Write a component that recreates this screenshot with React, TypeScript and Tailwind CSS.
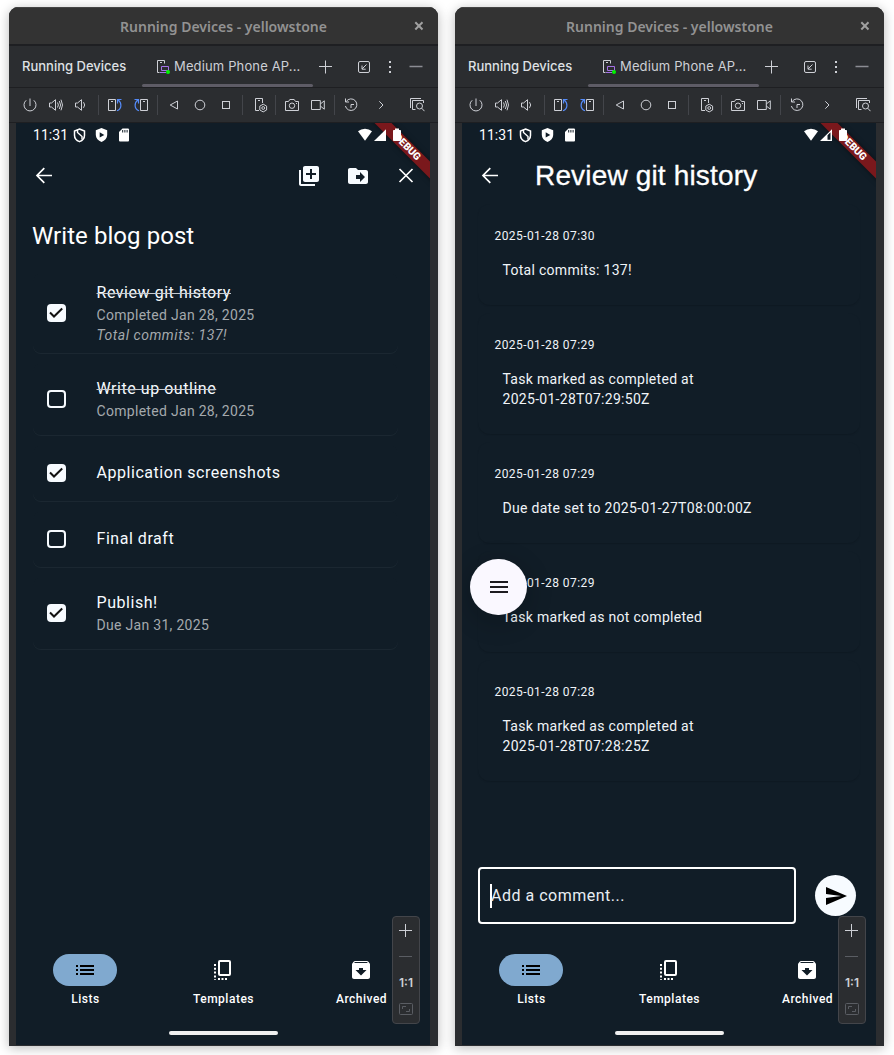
import React from "react";
import {
  MdLibraryAdd,
  MdDriveFileMove,
  MdSend,
  MdMenu,
  MdArchive,
} from "react-icons/md";

type IconProps = { children: React.ReactNode; className?: string; w?: number; h?: number };

function Glyph({ children, className = "", w = 16, h = 16 }: IconProps) {
  return (
    <svg
      width={w}
      height={h}
      viewBox={`0 0 ${w} ${h}`}
      fill="none"
      stroke="#ced0d6"
      strokeWidth="1"
      className={`shrink-0 ${className}`}
    >
      {children}
    </svg>
  );
}

function BackArrow() {
  return (
    <svg width="24" height="24" viewBox="0 0 24 24" fill="none" stroke="#fff" strokeWidth="1.700">
      <path d="M20 11.500H5.200M12.300 4.200L5 11.500l7.300 7.300" />
    </svg>
  );
}

function CloseCross() {
  return (
    <svg width="24" height="24" viewBox="0 0 24 24" fill="none" stroke="#fff" strokeWidth="1.700">
      <path d="M5.500 5l13 13M18.500 5l-13 13" />
    </svg>
  );
}

function Slot({ children, className = "w-[26px]" }: { children: React.ReactNode; className?: string }) {
  return <div className={`flex shrink-0 items-center justify-center ${className}`}>{children}</div>;
}

function Separator() {
  return (
    <div className="flex w-[7px] shrink-0 justify-center">
      <div className="h-5 w-px bg-[#43454a]" />
    </div>
  );
}

function TitleBar() {
  return (
    <div className="relative flex h-[37px] shrink-0 items-center justify-center border-t border-[#454545] bg-[#333333] font-['Noto_Sans',sans-serif] text-[14px] font-semibold text-[#929292]">
      <span>Running Devices - yellowstone</span>
      <svg width="10" height="10" viewBox="0 0 10 10" className="absolute right-[14px] top-[13px]" stroke="#a0a0a0" strokeWidth="2">
        <path d="M1.3 1.3l7.2 7.2M8.5 1.3L1.3 8.5" />
      </svg>
    </div>
  );
}

function TabBar() {
  return (
    <div className="flex h-[44px] shrink-0 items-center border-b border-t-2 border-b-[#1e1f22] border-t-[#1e1f22] bg-[#2b2d30] pl-[13px] font-['Inter',sans-serif] text-[13px] text-[#dfe1e5]">
      <span className="w-[120px] shrink-0 font-medium">Running Devices</span>
      <div className="relative flex h-full w-[171px] shrink-0 items-center pl-[13px]">
        <Glyph className="mr-[3px]">
          <path d="M4.5 13.5h-2v-12h7v3" />
          <path d="M5 3.5h2" />
          <path d="M6.5 7.5h7v4h-7zM5 13.5h6" stroke="#a571e6" />
          <circle cx="13" cy="13" r="2" fill="#00f500" stroke="none" />
        </Glyph>
        <span className="whitespace-nowrap tracking-[0.14px] text-[#ced0d6]">Medium Phone AP...</span>
        <div className="absolute bottom-0 left-0 h-[3px] w-full rounded-full bg-[#5e5c66]" />
      </div>
      <Glyph className="ml-1">
        <path d="M8.5 1.5v13M2 7.500h13" />
      </Glyph>
      <Glyph className="ml-[23px]">
        <rect x="2.5" y="2.5" width="11" height="11" rx="1.5" />
        <path d="M10.5 5.5L6 10M6 6.5v3.7h3.7" />
      </Glyph>
      <Glyph className="ml-[10px]">
        <path d="M8 2v2M8 7v2M8 12v2" strokeWidth="2" />
      </Glyph>
      <Glyph className="ml-[10px]">
        <path d="M1.500 7.500h13" stroke="#8b8d93" strokeWidth="1.4" />
      </Glyph>
    </div>
  );
}

function DeviceToolbar() {
  return (
    <div className="flex h-[35px] shrink-0 items-center border-b border-[#1e1f22] bg-[#2b2d30] pl-2">
      <Slot>
        <Glyph>
          <path d="M4.2 3.3a6 6 0 1 0 7.6 0M8 1.5V9" />
        </Glyph>
      </Slot>
      <Slot className="w-[26px] pr-px">
        <Glyph>
          <path d="M1.5 6v4h2l4 3.3V2.700l-4 3.300zM9.500 5.500q1.800 2.500 0 5M11.300 4q2.600 4 0 8M13 2.700q3 5.300 0 10.600" />
        </Glyph>
      </Slot>
      <Slot className="w-[26px] pr-[2px]">
        <Glyph>
          <path d="M2.500 6v4h2l4 3.300V2.700l-4 3.300zM10.500 5.200q2.400 2.800 0 5.600" />
        </Glyph>
      </Slot>
      <Separator />
      <Slot>
        <Glyph>
          <path d="M1.500 2.500h7v11h-7zM4 4.500h2" />
          <path d="M10 13.800c4.800-2 5.200-7.500 1-11M14.500 2.500h-4v4" stroke="#548af7" strokeWidth="1.200" />
        </Glyph>
      </Slot>
      <Slot>
        <Glyph>
          <path d="M7.500 2.500h7v11h-7zM10 4.500h2" />
          <path d="M6 13.800C1.200 11.800.8 6.300 5 2.800M1.500 2.500h4v4" stroke="#548af7" strokeWidth="1.200" />
        </Glyph>
      </Slot>
      <Separator />
      <Slot>
        <Glyph>
          <path d="M11.500 4v8L4.200 8z" />
        </Glyph>
      </Slot>
      <Slot>
        <Glyph>
          <circle cx="8" cy="8" r="4.800" />
        </Glyph>
      </Slot>
      <Slot>
        <Glyph>
          <rect x="4.500" y="4.500" width="7" height="7" />
        </Glyph>
      </Slot>
      <Separator />
      <Slot className="w-[26px] pl-[3px]">
        <Glyph>
          <path d="M6 13.500H2.500v-12h7V6M5 3.500h2" />
          <path d="M10.200 7.200l3.400 1.900v3.900l-3.400 1.900-3.400-1.900V9.100z" />
          <circle cx="10.200" cy="11" r="1.400" />
        </Glyph>
      </Slot>
      <Separator />
      <Slot>
        <Glyph>
          <path d="M1.500 4.500h3l1.300-2h4.400l1.300 2h3v9h-13z" strokeLinejoin="round" />
          <circle cx="8" cy="8.700" r="2.700" />
          <path d="M12 6.500h1" />
        </Glyph>
      </Slot>
      <Slot>
        <Glyph>
          <path d="M1.500 3.500h8.800v9H1.500zM10.300 7l4-3.200v8.400l-4-3.200" />
        </Glyph>
      </Slot>
      <Separator />
      <Slot>
        <Glyph>
          <path d="M3.200 4.500A5.800 5.800 0 1 1 2.400 9M2.500 1.500v3.500H6M8 11V7.500h3" />
        </Glyph>
      </Slot>
      <Slot className="w-[33px]">
        <Glyph>
          <path d="M6.300 4.300L10 8l-3.700 3.700" />
        </Glyph>
      </Slot>
      <Slot className="ml-[7px] w-[26px]">
        <Glyph>
          <path d="M1.500 11V1.500H12M6.500 12.500h-3v-9h11V6" />
          <circle cx="10.500" cy="9" r="3" />
          <path d="M12.700 11.200l2.800 3" />
        </Glyph>
      </Slot>
    </div>
  );
}

function StatusBar({ weakSignal }: { weakSignal: boolean }) {
  return (
    <div className="relative flex h-6 shrink-0 items-center pl-[17px] font-['Roboto',sans-serif] text-[14px] text-white">
      <span className="w-[39px] pt-px tracking-[0.05px]">11:31</span>
      <svg width="14" height="16" viewBox="0 0 14 16" className="mr-[9px]" fill="none" stroke="#fff" strokeWidth="1.500">
        <path d="M7.500 2l5 2v4.200c0 3-2 5.300-5 6.400-3-1.100-5-3.400-5-6.400V4z" />
        <path d="M5.500 3v2.500l4.500 4v3" strokeWidth="1.400" />
      </svg>
      <svg width="14" height="16" viewBox="0 0 14 16" className="mr-[9px]">
        <path d="M6.500 1l5.700 2.300V8c0 3.300-2.400 5.700-5.700 7C3.200 13.700.8 11.300.8 8V3.300z" fill="#fff" />
        <path d="M4.700 5.200l4.600 2.700-4.600 2.700z" fill="#111d27" />
      </svg>
      <svg width="12" height="16" viewBox="0 0 12 16">
        <path d="M4.500 1.500H10a1 1 0 0 1 1 1v11a1 1 0 0 1-1 1H2a1 1 0 0 1-1-1V5z" fill="#fff" />
        <path d="M4.700 3v2.500M6.900 3v2.500M9.100 3v2.500" stroke="#111d27" strokeWidth="1" />
      </svg>
      <svg width="46" height="16" viewBox="0 0 46 16" className="absolute left-[341px] top-1 z-20" fill="#fff">
        <path d="M1 4.300a10.500 10.500 0 0 1 14 0L8 13.700z" />
        {weakSignal ? (
          <path fillRule="evenodd" d="M17 14L29 2.300V14zM24.500 8.300v4.400h3V5.300z" />
        ) : (
          <path d="M17 14L29 2.300V14z" />
        )}
        <path d="M38 1.500h4V3h1.200a.8.800 0 0 1 .8.800v9.400a.8.800 0 0 1-.8.800h-6.400a.8.800 0 0 1-.8-.8V3.800a.8.800 0 0 1 .8-.8H38z" />
      </svg>
    </div>
  );
}

function DebugBanner() {
  return (
    <div className="absolute right-0 top-0 z-10 h-16 w-16 overflow-hidden">
      <div className="absolute left-[-19.500px] top-[18px] flex h-[12px] w-[120px] rotate-45 items-center justify-center bg-[#7a181c] pl-px font-['Roboto',sans-serif] text-[10.200px] font-black text-white shadow-[0_0_5px_rgba(0,0,0,0.5)]">
        DEBUG
      </div>
    </div>
  );
}

function ListGlyph() {
  return (
    <svg width="24" height="24" viewBox="0 0 24 24" fill="#000">
      <path d="M3 7h2v2H3zM3 11h2v2H3zM3 15h2v2H3zM7 7h14v2H7zM7 11h14v2H7zM7 15h14v2H7z" />
    </svg>
  );
}

function TemplatesGlyph() {
  return (
    <svg width="24" height="24" viewBox="0 0 24 24" fill="none" stroke="#fff" strokeWidth="2">
      <rect x="8" y="3" width="11" height="14" rx="1" />
      <path d="M4 6v16" strokeDasharray="2 1.800" />
      <path d="M7 21h9.500" strokeDasharray="2 1.500" />
    </svg>
  );
}

function NavItem({ label, active, children }: { label: string; active?: boolean; children: React.ReactNode }) {
  return (
    <div className="flex flex-1 flex-col items-center">
      <div className={`flex h-8 w-16 items-center justify-center rounded-full ${active ? "bg-[#80a9cf]" : ""}`}>
        {children}
      </div>
      <span className="mt-[5px] pl-px text-[12px] font-medium leading-4 tracking-[0.5px] text-white">{label}</span>
    </div>
  );
}

function BottomNav() {
  return (
    <div className="flex h-[91px] shrink-0 flex-col">
      <div className="flex">
        <NavItem label="Lists" active>
          <ListGlyph />
        </NavItem>
        <NavItem label="Templates">
          <TemplatesGlyph />
        </NavItem>
        <NavItem label="Archived">
          <MdArchive size={24} color="#fff" />
        </NavItem>
      </div>
      <div className="ml-[152.500px] mt-6 h-1 w-[109px] rounded-full bg-[#f0f0f0]" />
    </div>
  );
}

function ZoomPanel() {
  return (
    <div className="absolute bottom-[21px] right-[10px] z-20 flex h-[108px] w-7 flex-col items-center rounded border border-[#43454a] bg-[#2b2d30] font-['Inter',sans-serif]">
      <Glyph className="mt-[6px]">
        <path d="M7.500 1v13M1 7.500h13" />
      </Glyph>
      <Glyph className="mt-[10px]">
        <path d="M1 7.500h13" stroke="#5a5d63" />
      </Glyph>
      <span className="mt-[10px] text-[12px] font-semibold leading-4 text-[#ced0d6]">1:1</span>
      <Glyph className="mt-[10px]">
        <g stroke="#5a5d63">
          <rect x="1.500" y="2.500" width="13" height="11" rx="1" />
          <path d="M4.500 8V5.500H8M11.500 8v2.500H8" />
        </g>
      </Glyph>
    </div>
  );
}

function DeviceWindow({ weakSignal = false, children }: { weakSignal?: boolean; children: React.ReactNode }) {
  return (
    <div className="flex h-[1039px] w-[429px] shrink-0 flex-col overflow-hidden rounded-t-[9px] bg-[#2b2d30] shadow-[0_2px_12px_rgba(0,0,0,0.28)]">
      <TitleBar />
      <TabBar />
      <DeviceToolbar />
      <div className="relative ml-[7px] flex h-[922px] w-[414px] shrink-0 flex-col overflow-hidden bg-[#111d27] font-['Roboto',sans-serif] text-white">
        <StatusBar weakSignal={weakSignal} />
        <DebugBanner />
        {children}
        <BottomNav />
        <ZoomPanel />
      </div>
    </div>
  );
}

function Checkbox({ checked }: { checked: boolean }) {
  return (
    <div
      className={`ml-[14px] mr-[31px] flex h-[18px] w-[18.500px] shrink-0 items-center justify-center rounded-[4px] ${
        checked ? "bg-[#f7fbff]" : "border-2 border-[#f7fbff]"
      }`}
    >
      {checked && (
        <svg width="18" height="18" viewBox="0 0 18 18" fill="none" stroke="#111" strokeWidth="2">
          <path d="M3 8.500l4 4 8.200-8" />
        </svg>
      )}
    </div>
  );
}

type Task = { title: string; checked: boolean; struck?: boolean; sub?: string; note?: string; height: string };

const tasks: Task[] = [
  { title: "Review git history", checked: true, struck: true, sub: "Completed Jan 28, 2025", note: "Total commits: 137!", height: "h-[80px]" },
  { title: "Write up outline", checked: false, struck: true, sub: "Completed Jan 28, 2025", height: "h-[72px]" },
  { title: "Application screenshots", checked: true, height: "h-[56px]" },
  { title: "Final draft", checked: false, height: "h-[56px]" },
  { title: "Publish!", checked: true, sub: "Due Jan 31, 2025", height: "h-[72px]" },
];

function TaskRow({ task }: { task: Task }) {
  return (
    <div className={`flex items-center rounded-lg shadow-[0_1px_0_#1b2731] ${task.height}`}>
      <Checkbox checked={task.checked} />
      <div className="whitespace-nowrap text-[14px] leading-5 tracking-[0.3px] text-[#a4a9ad]">
        <div className="text-[16px] leading-6 tracking-[0.54px] text-[#f7fbff]">
          <span className={task.struck ? "line-through decoration-[#c5cacf] decoration-1" : ""}>{task.title}</span>
        </div>
        {task.sub && <div>{task.sub}</div>}
        {task.note && <div className="italic tracking-[0.54px]">{task.note}</div>}
      </div>
    </div>
  );
}

function TaskListScreen() {
  return (
    <>
      <div className="flex h-14 shrink-0 items-center pl-1 pt-px">
        <Slot className="mr-auto w-12">
          <BackArrow />
        </Slot>
        <Slot className="w-12 pr-[2px]">
          <MdLibraryAdd size={24} color="#f7fbff" />
        </Slot>
        <Slot className="w-12 pr-px">
          <MdDriveFileMove size={24} color="#f7fbff" />
        </Slot>
        <Slot className="w-12">
          <CloseCross />
        </Slot>
      </div>
      <h1 className="ml-4 mt-[17px] text-[24px] leading-8 tracking-[0.06px]">Write blog post</h1>
      <div className="ml-[17px] mt-[21px] flex w-[365px] flex-1 flex-col gap-[10px]">
        {tasks.map((task) => (
          <TaskRow key={task.title} task={task} />
        ))}
      </div>
    </>
  );
}

const comments = [
  { date: "2025-01-28 07:30", lines: ["Total commits: 137!"] },
  { date: "2025-01-28 07:29", lines: ["Task marked as completed at", "2025-01-28T07:29:50Z"] },
  { date: "2025-01-28 07:29", lines: ["Due date set to 2025-01-27T08:00:00Z"] },
  { date: "2025-01-28 07:29", lines: ["Task marked as not completed"] },
  { date: "2025-01-28 07:28", lines: ["Task marked as completed at", "2025-01-28T07:28:25Z"] },
];

function HistoryScreen() {
  return (
    <>
      <div className="flex h-14 shrink-0 items-center pl-1 pt-px">
        <Slot className="w-12">
          <BackArrow />
        </Slot>
        <h1 className="ml-[21px] whitespace-nowrap font-['Liberation_Sans',sans-serif] text-[28px] leading-9 tracking-[0.16px] [-webkit-text-stroke:0.3px_white]">
          Review git history
        </h1>
      </div>
      <div className="mx-4 mt-px flex flex-1 flex-col gap-2 text-[#f0f4f8]">
        {comments.map((comment, index) => (
          <div key={index} className="rounded-xl px-4 pb-[25px] pt-6 shadow-[0_1px_1px_#0f1a23]">
            <div className="pl-[0.500px] text-[12px] leading-4 tracking-[0.43px]">{comment.date}</div>
            <div className="ml-[8.500px] mt-4 text-[14px] leading-5 tracking-[0.29px]">
              {comment.lines.map((line) => (
                <div key={line}>{line}</div>
              ))}
            </div>
          </div>
        ))}
      </div>
      <div className="mb-[30px] ml-4 flex shrink-0 items-center">
        <div className="flex h-[57px] w-[318px] items-center rounded border-2 border-white pl-[10px] text-[16px] tracking-[0.5px] text-[#e9eef3]">
          <div className="-mr-px h-6 w-[2px] bg-white" />
          <span>Add a comment...</span>
        </div>
        <div className="ml-[19px] flex h-[41px] w-[41px] items-center justify-center rounded-full bg-[#f7fbff]">
          <MdSend size={24} color="#000" />
        </div>
      </div>
      <div className="absolute left-2 top-[436px] flex h-14 w-[57px] items-center justify-center rounded-full bg-[#faf8ff] shadow-[0_6px_20px_8px_rgba(0,0,0,0.12)]">
        <MdMenu size={24} color="#1d1b20" />
      </div>
    </>
  );
}

export default function App() {
  return (
    <div className="flex h-[1055px] w-[894px] gap-[17px] overflow-hidden bg-white pl-[9px] pt-[7px]">
      <DeviceWindow>
        <TaskListScreen />
      </DeviceWindow>
      <DeviceWindow weakSignal>
        <HistoryScreen />
      </DeviceWindow>
    </div>
  );
}
